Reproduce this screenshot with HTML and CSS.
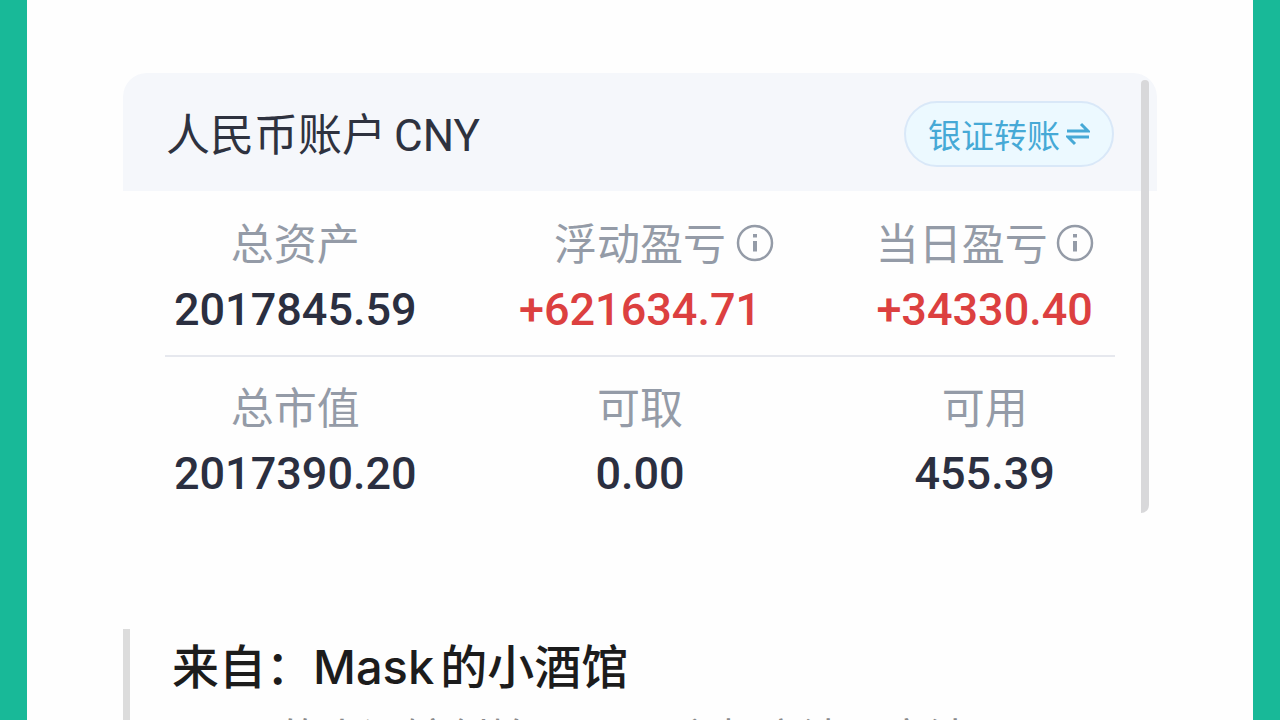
FILE: index.html
```html
<!DOCTYPE html>
<html lang="zh-CN">

<head>
     <meta charset="UTF-8">
     <meta name="viewport" content="width=device-width, initial-scale=1.0">
     <title>人民币账户 CNY</title>
     <link rel="stylesheet" href="styles.css">
</head>

<body>
     <main class="page">
          <section class="account">
               <header class="account-header">
                    <h1 class="account-title"><span>人民币账户</span><span>CNY</span></h1>
                    <button class="transfer" type="button">
                         银证转账
                         <svg class="transfer-icon" viewBox="0 0 24 24" aria-hidden="true">
                              <path d="M1 9H22L15 2M23 15H2L9 22" />
                         </svg>
                    </button>
               </header>
               <dl class="stats">
                    <div class="stat">
                         <dt>总资产</dt>
                         <dd>2017845.59</dd>
                    </div>
                    <div class="stat">
                         <dt>
                              <span class="label">浮动盈亏
                                   <svg class="info info-hang" viewBox="0 0 38 38" aria-hidden="true">
                                        <circle cx="19" cy="19" r="17" />
                                        <path d="M19 17V27.5M19 10V13.5" />
                                   </svg>
                              </span>
                         </dt>
                         <dd class="up">+621634.71</dd>
                    </div>
                    <div class="stat">
                         <dt>
                              当日盈亏
                              <svg class="info" viewBox="0 0 38 38" aria-hidden="true">
                                   <circle cx="19" cy="19" r="17" />
                                   <path d="M19 17V27.5M19 10V13.5" />
                              </svg>
                         </dt>
                         <dd class="up">+34330.40</dd>
                    </div>
               </dl>
               <hr class="divider">
               <dl class="stats">
                    <div class="stat">
                         <dt>总市值</dt>
                         <dd>2017390.20</dd>
                    </div>
                    <div class="stat">
                         <dt>可取</dt>
                         <dd>0.00</dd>
                    </div>
                    <div class="stat">
                         <dt>可用</dt>
                         <dd>455.39</dd>
                    </div>
               </dl>
               <div class="scrollbar"></div>
          </section>
          <blockquote class="source">
               <h2 class="source-title"><span>来自：Mask</span><span>的小酒馆</span></h2>
               <p class="source-text">Mask的小酒馆创始2023，主打高清是它法</p>
          </blockquote>
     </main>
</body>

</html>
```

FILE: styles.css
```css
html {
     box-sizing: border-box;
     font-family: Roboto, "Noto Sans CJK SC", sans-serif;
     font-size: 16px;
}

*,
*:before,
*:after {
     box-sizing: inherit;
}

body {
     margin: 0;
     height: 100vh;
     overflow: hidden;
     background-color: #fefefe;
}

h1,
h2,
p,
dl,
dd,
blockquote {
     margin: 0;
}

.page {
     min-height: 100vh;
     padding: 73px 96px 0;
     border: solid #18b998;
     border-width: 0 27px;
}

.account {
     position: relative;
}

.account-header {
     display: flex;
     justify-content: space-between;
     align-items: center;
     height: 118px;
     padding: 4px 43px 0;
     border-radius: 24px 24px 0 0;
     background-color: #f5f7fb;
}

.account-title {
     display: flex;
     gap: 8px;
     padding-top: 4px;
     color: #2e323f;
     font-size: 44px;
     font-weight: 400;
     line-height: 64px;
}

.transfer {
     display: flex;
     align-items: center;
     gap: 6px;
     height: 66px;
     padding: 0 22px;
     border: 2px solid #d9e8f8;
     border-radius: 33px;
     background-color: #ecf9ff;
     color: #46a9d6;
     font: inherit;
     font-size: 33px;
}

.transfer-icon {
     width: 24px;
     height: 24px;
     fill: none;
     stroke: currentColor;
     stroke-width: 3;
}

.stats {
     display: grid;
     grid-template-columns: repeat(3, 1fr);
     padding: 26px 0 8px;
     text-align: center;
}

.stat dt {
     display: flex;
     justify-content: center;
     align-items: center;
     gap: 8px;
     color: #949ba7;
     font-size: 43px;
     line-height: 56px;
}

.stat dd {
     color: #2b2f40;
     font-size: 45px;
     font-weight: 500;
     line-height: 74px;
}

.stat .up {
     color: #dc4040;
}

.label {
     position: relative;
}

.info {
     width: 38px;
     height: 38px;
     margin-top: -4px;
     fill: none;
     stroke: #949ba7;
     stroke-width: 2.5;
}

.info path {
     stroke-width: 4;
}

/* the icon hangs outside, the label stays centered over its value */
.info-hang {
     position: absolute;
     top: 11px;
     left: 100%;
     margin-left: 10px;
}

.divider {
     height: 2px;
     margin: 0 42px -2px;
     border: 0;
     background-color: #e6e8ee;
}

.scrollbar {
     position: absolute;
     top: 7px;
     right: 8px;
     bottom: 6px;
     width: 8px;
     border-radius: 4px 4px 8px 0;
     background-color: #d8d8da;
}

.source {
     margin-top: 110px;
     padding: 6px 0 0 42px;
     border-left: 7px solid #dcdcdc;
}

.source-title {
     display: flex;
     gap: 6px;
     color: #1c1c1c;
     font-family: Inter, "Noto Sans CJK SC", sans-serif;
     font-size: 47px;
     font-weight: 500;
     line-height: 64px;
}

.source-text {
     padding-top: 8px;
     color: #8a8a8a;
     font-family: Inter, "Noto Sans CJK SC", sans-serif;
     font-size: 42px;
     line-height: 64px;
     white-space: nowrap;
}
```
